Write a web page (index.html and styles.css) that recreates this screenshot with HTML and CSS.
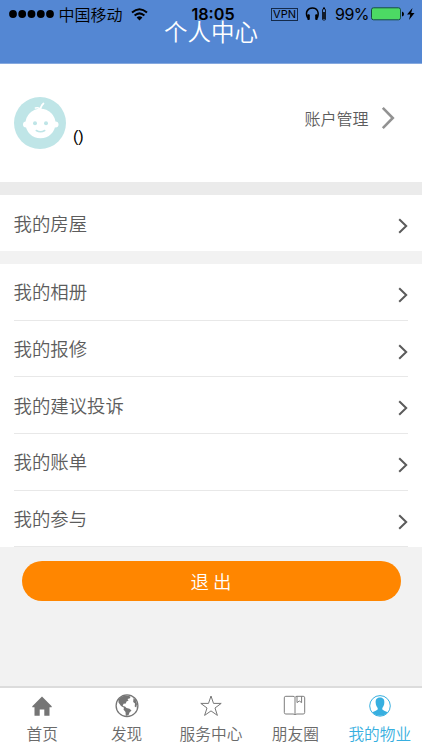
FILE: index.html
```html
<!DOCTYPE html>
<html lang="zh-CN">
<head>
<meta charset="utf-8">
<meta name="viewport" content="width=device-width, initial-scale=1">
<title>个人中心</title>
<link rel="stylesheet" href="styles.css">
</head>
<body>
<div class="app">
  <header class="header">
    <div class="status">
      <div class="status-left">
        <svg class="dots" width="46" height="10" viewBox="0 0 46 10"><circle cx="4" cy="5" r="3.9"/><circle cx="13.2" cy="5" r="3.9"/><circle cx="22.5" cy="5" r="3.9"/><circle cx="31.8" cy="5" r="3.9"/><circle cx="41" cy="5" r="3.9"/></svg>
        <span class="carrier">中国移动</span>
        <svg class="wifi" width="17" height="13" viewBox="0 0 17 13"><g fill="none" stroke="#000" stroke-width="2"><path d="M1 4.6Q8.5-2 16 4.6"/><path d="M3.6 7.6Q8.5 3.2 13.4 7.6"/></g><path d="M5.6 9.4Q8.5 7 11.4 9.4L8.5 12.4z"/></svg>
      </div>
      <span class="time">18:05</span>
      <div class="status-right">
        <span class="vpn">VPN</span>
        <svg class="phones" width="22" height="14" viewBox="0 0 22 14"><path d="M2.7 11C-.4 5 3 1 7.5 1S14.600 5 12.300 11" fill="none" stroke="#000" stroke-width="1.500"/><rect x="2.300" y="7.300" width="2.500" height="5.700" rx="1"/><rect x="10.200" y="7.300" width="2.500" height="5.700" rx="1"/><path d="M18 .5h2V2h-2z"/><rect x="17.500" y="2" width="3" height="11" rx=".8" fill="none" stroke="#000" stroke-width=".8"/><path d="M18.200 5h1.600v7h-1.600z"/></svg>
        <span class="percent">99%</span>
        <svg class="battery" width="44" height="14" viewBox="0 0 44 14"><rect x=".5" y=".8" width="29" height="12" rx="2" fill="#4cd964" stroke="#164d45"/><path d="M31 4.500q2 .5 2 2.500t-2 2.500z"/><path d="M41.500 1L36 7.600h3.300L38 13l5.500-6.900h-3.300z"/></svg>
      </div>
    </div>
    <h1 class="title">个人中心</h1>
  </header>

  <main class="content">
    <section class="profile">
      <svg class="avatar" width="52" height="52" viewBox="0 0 52 52"><circle cx="26" cy="26" r="26" fill="#bfe5e7"/><g fill="#fff"><ellipse cx="26.500" cy="26.500" rx="15" ry="14.800"/><circle cx="12" cy="27.500" r="3"/><circle cx="41.500" cy="27.500" r="3"/></g><path d="M26.500 15Q26 9.500 29.500 6.500M26.500 13Q25.500 10 21.500 11" fill="none" stroke="#fff" stroke-width="1.700" stroke-linecap="round"/><g fill="#bfe5e7"><circle cx="21" cy="26.300" r="2"/><circle cx="32" cy="26.300" r="2"/></g><path d="M22.300 33.500q4.200 2.600 8.400 0" fill="none" stroke="#bfe5e7" stroke-width="1.600" stroke-linecap="round"/></svg>
      <span class="name">()</span>
      <a class="account">账户管理<svg width="14" height="24" viewBox="0 0 14 24"><path d="M1.800 1.800L11.800 12 1.800 22.200" fill="none" stroke="#929292" stroke-width="2.600"/></svg></a>
    </section>

    <nav class="house">
      <a class="row"><span>我的房屋</span><svg class="arrow" viewBox="0 0 10 16"><path d="M1.200 1.200L8.200 8 1.200 14.800"/></svg></a>
    </nav>

    <nav class="menu">
      <a class="row"><span>我的相册</span><svg class="arrow" viewBox="0 0 10 16"><path d="M1.200 1.200L8.200 8 1.200 14.800"/></svg></a>
      <a class="row"><span>我的报修</span><svg class="arrow" viewBox="0 0 10 16"><path d="M1.200 1.200L8.200 8 1.200 14.800"/></svg></a>
      <a class="row"><span>我的建议投诉</span><svg class="arrow" viewBox="0 0 10 16"><path d="M1.200 1.200L8.200 8 1.200 14.800"/></svg></a>
      <a class="row"><span>我的账单</span><svg class="arrow" viewBox="0 0 10 16"><path d="M1.200 1.200L8.200 8 1.200 14.800"/></svg></a>
      <a class="row"><span>我的参与</span><svg class="arrow" viewBox="0 0 10 16"><path d="M1.200 1.200L8.200 8 1.200 14.800"/></svg></a>
    </nav>

    <button class="logout">退 出</button>
  </main>

  <footer class="tabs">
    <a class="tab"><svg width="24" height="24" viewBox="0 0 24 24"><path d="M12 2.500L2.300 12.200V13.300H4.500V21.800H9.700V15.500H14.300V21.800H19.500V13.300H21.700V12.200z" fill="#757575"/></svg><span>首页</span></a>
    <a class="tab"><svg width="24" height="24" viewBox="0 0 24 24"><circle cx="12" cy="11.700" r="10.900" fill="none" stroke="#757575" stroke-width="1.300"/><path d="M3.500 5.500Q7 1.300 12 1.500L15.500 2.500 15 4.300 12.500 5 13.500 6.500 11.500 7.600 10.800 9.500 8.500 9.800 7.700 12 10 12.600 11.500 14 14.500 14.800 16.500 16.500 14.500 18.500 13.500 21.200 10.800 22 10.500 18 8.500 15.500 9 13.700 6 12 3.500 8.500zM18.500 4L21 6.500 22 10 21.300 13.500 19.700 12.500 20 9.500 18.200 8z" fill="#757575"/></svg><span>发现</span></a>
    <a class="tab"><svg width="24" height="24" viewBox="0 0 24 24"><path d="M12 2l2.500 7.400H22.200L16 14l2.400 7.400L12 16.900l-6.400 4.500L8 14 1.800 9.400h7.700z" fill="none" stroke="#777"/></svg><span>服务中心</span></a>
    <a class="tab"><svg width="24" height="24" viewBox="0 0 24 24"><path d="M12 3.300Q11.500 2.300 10 2.300H2.800Q1.300 2.300 1.300 3.800V18.500Q1.300 20 2.800 20H10Q11.500 20 12 21 12.500 20 14 20H20.200Q21.700 20 21.700 18.500V3.800Q21.700 2.300 20.200 2.300H14Q12.500 2.300 12 3.300V21M14 2.300V8.600L16.300 7 18.600 8.600V2.300" fill="none" stroke="#7c7c7c"/></svg><span>朋友圈</span></a>
    <a class="tab tab-active"><svg width="24" height="24" viewBox="0 0 24 24"><circle cx="12" cy="11.900" r="10.300" fill="none" stroke="#37afe0" stroke-width="1"/><path d="M12 3.500C8.500 3.500 7.400 5.800 7.700 9 7.800 11.500 9 13 9.700 14V15.600Q8.500 17 4.300 18.200 7.500 21.700 12 21.700T19.700 18.200Q15.500 17 14.300 15.600V14C15 13 16.200 11.500 16.300 9 16.600 5.800 15.500 3.500 12 3.500z" fill="#37afe0"/></svg><span>我的物业</span></a>
  </footer>
</div>
</body>
</html>
```
FILE: styles.css
```css
* {
  box-sizing: border-box;
}

body {
  margin: 0;
  font-family: "Noto Sans CJK SC", sans-serif;
  font-weight: 350;
  color: #5c5c5c;
}

.app {
  display: flex;
  flex-direction: column;
  height: 750px;
  background: #f2f2f2;
  overflow: hidden;
}

svg {
  display: block;
  flex: none;
}

.header {
  position: relative;
  height: 64px;
  flex: none;
  background: #5487d3;
  border-bottom: 1px solid #86a9df;
}

.title {
  margin: 0;
  padding-top: 13px;
  font-size: 23.5px;
  line-height: 36px;
  font-weight: 350;
  text-align: center;
  color: #fff;
}

/* System status bar, laid over the header */
.status {
  position: absolute;
  inset: 0 0 auto;
  display: grid;
  grid-template-columns: 190px 46px 1fr;
  height: 28px;
  align-items: center;
  color: #000;
  white-space: nowrap;
  line-height: 28px;
}

.status-left,
.status-right {
  display: flex;
  align-items: center;
}

.status-left {
  padding-left: 9px;
}

.carrier {
  margin-left: 3.5px;
  font-size: 16px;
  font-weight: 350;
}

.wifi {
  margin-left: 8px;
}

.time {
  font: 600 16.2px/28px Inter, sans-serif;
  text-align: center;
}

.status-right {
  justify-content: flex-end;
  padding-right: 7px;
}

.vpn {
  width: 27px;
  height: 13px;
  border: 1px solid #142a4a;
  font: 400 11px/11px Inter, sans-serif;
  text-align: center;
}

.phones {
  margin-left: 7px;
}

.percent {
  width: 33px;
  margin-left: 8px;
  font: 400 16px/28px Inter, sans-serif;
  letter-spacing: -0.5px;
}

.battery {
  margin-left: 3px;
}

.content {
  flex: 1;
}

.profile {
  display: flex;
  align-items: center;
  height: 118px;
  padding: 0 27px 0 14px;
  background: #fff;
}

.name {
  margin: 28px 0 0 7px;
  font: 400 16px/20px "Liberation Sans", sans-serif;
  color: #000;
}

.account {
  display: flex;
  align-items: center;
  gap: 12.5px;
  margin-left: auto;
  margin-top: -10px;
  font-size: 16px;
}

.house {
  border-top: 13px solid #ebebeb;
  background: #fff;
}

.menu {
  margin-top: 13px;
  background: #fff;
}

.row {
  display: flex;
  align-items: center;
  justify-content: space-between;
  height: 56.7px;
  margin: 0 14px 0 13.5px;
  font-size: 18.4px;
  line-height: 28px;
}

.row span {
  margin-top: -1px;
}

.house .row {
  height: 56px;
}

.menu .row {
  border-bottom: 1px solid #e8e8e8;
}

.arrow {
  width: 10px;
  height: 16px;
  margin-top: 6px;
  fill: none;
  stroke: #5b5b5b;
  stroke-width: 2;
}

.logout {
  display: block;
  width: 379px;
  height: 40px;
  margin: 13.3px auto 0;
  padding: 0;
  border: 0;
  border-radius: 20px;
  background: #ff8600;
  color: #fff;
  font: 350 18.4px/40px "Noto Sans CJK SC", sans-serif;
}

.tabs {
  display: grid;
  grid-template-columns: repeat(5, 1fr);
  height: 64px;
  border-top: 2px solid #dcdcdc;
  background: #fff;
}

.tab {
  display: flex;
  flex-direction: column;
  align-items: center;
  padding-top: 6px;
  font-size: 15.7px;
  line-height: 24px;
  white-space: nowrap;
  color: #6a6a6a;
}

.tab span {
  margin-top: 4px;
}

.tab-active {
  color: #37afe0;
}
```
